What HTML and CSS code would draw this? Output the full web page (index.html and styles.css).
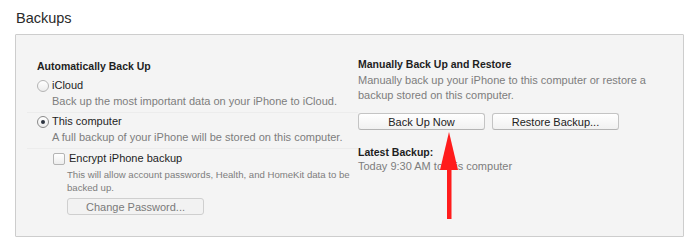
FILE: index.html
```html
<!DOCTYPE html>
<html lang="en">
<head>
    <meta charset="UTF-8">
    <title>Backups</title>
    <link rel="stylesheet" href="styles.css">
</head>
<body>
    <div class="page">
        <h2 class="title">Backups</h2>
        <div class="panel">
            <div class="column left">
                <div class="heading">Automatically Back Up</div>

                <label class="option first">
                    <span class="radio"></span>
                    <span>iCloud</span>
                </label>
                <div class="desc ruled">Back up the most important data on your iPhone to iCloud.</div>

                <label class="option">
                    <span class="radio checked"></span>
                    <span>This computer</span>
                </label>
                <div class="desc ruled">A full backup of your iPhone will be stored on this computer.</div>

                <div class="encrypt">
                    <label class="option check-row">
                        <span class="checkbox"></span>
                        <span>Encrypt iPhone backup</span>
                    </label>
                    <div class="note">This will allow account passwords, Health, and HomeKit data to be backed up.</div>
                    <button class="btn disabled pw">Change Password...</button>
                </div>
            </div>

            <div class="column right">
                <div class="heading">Manually Back Up and Restore</div>
                <div class="desc wrap">Manually back up your iPhone to this computer or restore a backup stored on this computer.</div>
                <div class="btn-row">
                    <button class="btn wide">Back Up Now</button>
                    <button class="btn wide">Restore Backup...</button>
                </div>
                <div class="heading latest">Latest Backup:</div>
                <div class="desc last">Today 9:30 AM to this computer</div>
            </div>

            <!-- red pointer arrow drawn over the screenshot -->
            <svg class="arrow" width="24" height="92" viewBox="0 0 24 92">
                <polygon points="12,0 3,38 21,38" fill="#ff1c1c"/>
                <rect x="10" y="30" width="4.5" height="57" fill="#ff1c1c"/>
            </svg>
        </div>
    </div>
</body>
</html>
```

FILE: styles.css
```css
body {
    margin: 0;
    background: #ffffff;
    font-family: "Liberation Sans", Arial, sans-serif;
    color: #222222;
}
.page {
    width: 700px;
    height: 250px;
    padding: 9px 16px 0 15px;
    box-sizing: border-box;
}
.title {
    margin: 0 0 0 1px;
    font-size: 14.5px;
    font-weight: normal;
    line-height: 18px;
    color: #2a2a2a;
}
.panel {
    position: relative;
    margin-top: 7px;
    height: 203px;
    box-sizing: border-box;
    background: #f4f4f4;
    border: 1px solid #cdcdcd;
    border-radius: 1px;
    display: grid;
    grid-template-columns: 321px 1fr;
    padding: 24px 0 0 21px;
    font-size: 11px;
}
.column {
    display: flex;
    flex-direction: column;
}
.heading {
    font-weight: bold;
    line-height: 15px;
    color: #1e1e1e;
    font-size: 10.5px;
}
.option {
    display: flex;
    align-items: center;
    line-height: 15px;
    margin-top: 1px;
    color: #1e1e1e;
}
.option.first {
    margin-top: 4px;
}
.radio {
    width: 10px;
    height: 10px;
    border-radius: 50%;
    border: 1px solid #b4b4b4;
    background: linear-gradient(#ffffff, #ececec);
    margin-right: 3px;
    position: relative;
    flex: none;
}
.radio.checked {
    border-color: #8a8a8a;
}
.radio.checked::after {
    content: "";
    position: absolute;
    left: 3px;
    top: 3px;
    width: 4px;
    height: 4px;
    border-radius: 50%;
    background: #2d3440;
}
.desc {
    color: #7d7d7d;
    line-height: 16px;
    margin-left: 15px;
    white-space: nowrap;
}
.desc.ruled {
    padding-bottom: 3px;
    margin-left: -10px;
    padding-left: 25px;
    border-bottom: 1px solid #ececec;
}
.encrypt {
    margin-left: 16px;
    display: flex;
    flex-direction: column;
}
.check-row {
    margin-top: 2px;
}
.checkbox {
    width: 10px;
    height: 10px;
    border: 1px solid #b4b4b4;
    border-radius: 2px;
    background: linear-gradient(#ffffff, #ededed);
    margin-right: 4px;
    flex: none;
}
.note {
    margin-left: 14px;
    margin-top: 2px;
    font-size: 9.6px;
    line-height: 13px;
    color: #7d7d7d;
    width: 290px;
}
.btn {
    font-family: "Liberation Sans", Arial, sans-serif;
    font-size: 11px;
    color: #222222;
    height: 17px;
    padding: 0;
    background: linear-gradient(#ffffff, #f1f1f1);
    border: 1px solid #c4c4c4;
    border-bottom-color: #b4b4b4;
    border-radius: 3px;
}
.btn.disabled {
    color: #7a7a7a;
    background: #f2f2f2;
    border-color: #cfcfcf;
}
.pw {
    margin: 4px 0 0 14px;
    width: 137px;
}
.right .desc {
    margin-left: 0;
}
.right .heading {
    margin-top: -2px;
}
.desc.wrap {
    white-space: normal;
    width: 300px;
    margin-top: 1px;
    line-height: 15px;
}
.btn-row {
    display: flex;
    gap: 7px;
    margin-top: 10px;
}
.btn.wide {
    width: 127px;
}
.heading.latest {
    margin-top: 15px;
    line-height: 14px;
}
.desc.last {
    line-height: 14px;
}
.arrow {
    position: absolute;
    left: 421px;
    top: 97px;
}
```
